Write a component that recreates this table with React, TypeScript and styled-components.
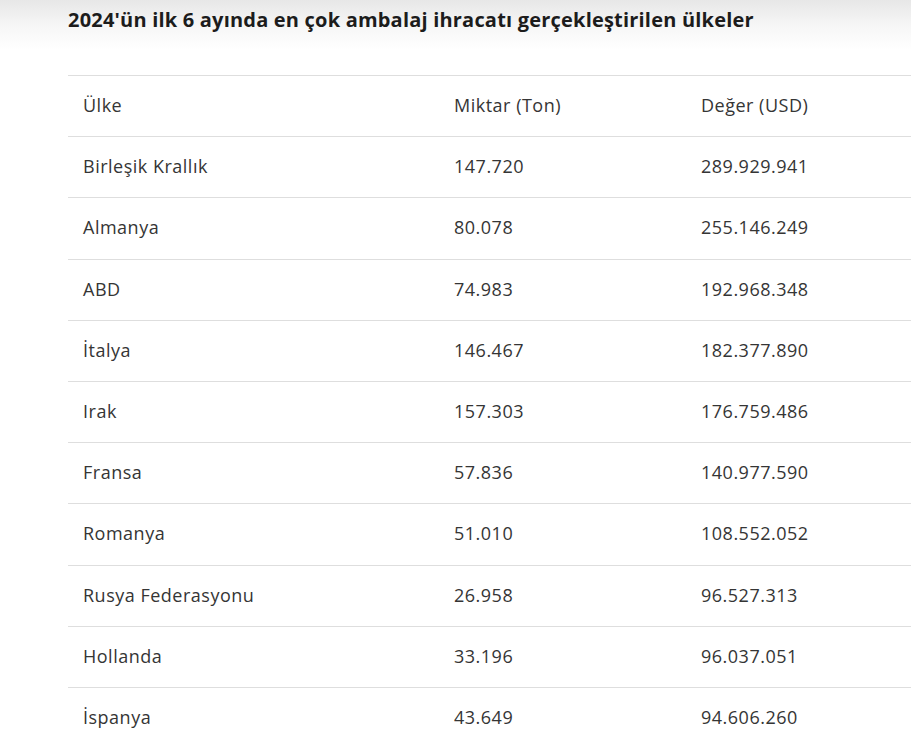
import React from "react";
import styled, { createGlobalStyle } from "styled-components";

const Global = createGlobalStyle`
  html, body { margin: 0; padding: 0; background: #fff; }
  body { font-family: "Open Sans", "Noto Sans", "Liberation Sans", sans-serif; }
`;

const Page = styled.div`
  width: 911px;
  height: 747px;
  overflow: hidden;
  background: linear-gradient(to bottom, #e7e7e7 0px, #f6f6f6 25px, #ffffff 50px);
  background-repeat: no-repeat;
`;

const Title = styled.h2`
  margin: 0;
  padding: 7px 0 0 68px;
  height: 75px;
  box-sizing: border-box;
  font-size: 20px;
  line-height: 26px;
  font-weight: 700;
  letter-spacing: 0.2px;
  color: #1c1c1c;
`;

const Table = styled.table`
  margin-left: 68px;
  width: 843px;
  border-collapse: collapse;
  table-layout: fixed;
`;

const Col = styled.col<{ $w?: number }>`
  width: ${(p) => (p.$w ? `${p.$w}px` : "auto")};
`;

const Row = styled.tr`
  border-top: 1px solid #dedede;
  height: 61.2px;
`;

const Cell = styled.td`
  padding: 0 15px 2px;
  font-size: 18px;
  letter-spacing: 0.5px;
  color: #353535;
  font-weight: 400;
  vertical-align: middle;
  white-space: nowrap;
`;

const rows: [string, string, string][] = [
  ["Ülke", "Miktar (Ton)", "Değer (USD)"],
  ["Birleşik Krallık", "147.720", "289.929.941"],
  ["Almanya", "80.078", "255.146.249"],
  ["ABD", "74.983", "192.968.348"],
  ["İtalya", "146.467", "182.377.890"],
  ["Irak", "157.303", "176.759.486"],
  ["Fransa", "57.836", "140.977.590"],
  ["Romanya", "51.010", "108.552.052"],
  ["Rusya Federasyonu", "26.958", "96.527.313"],
  ["Hollanda", "33.196", "96.037.051"],
  ["İspanya", "43.649", "94.606.260"],
];

export default function App() {
  return (
    <Page>
      <Global />
      <Title>2024'ün ilk 6 ayında en çok ambalaj ihracatı gerçekleştirilen ülkeler</Title>
      <Table>
        <colgroup>
          <Col $w={371} />
          <Col $w={247} />
          <Col />
        </colgroup>
        <tbody>
          {rows.map((r, i) => (
            <Row key={i}>
              {r.map((c, j) => (
                <Cell key={j}>{c}</Cell>
              ))}
            </Row>
          ))}
        </tbody>
      </Table>
    </Page>
  );
}
